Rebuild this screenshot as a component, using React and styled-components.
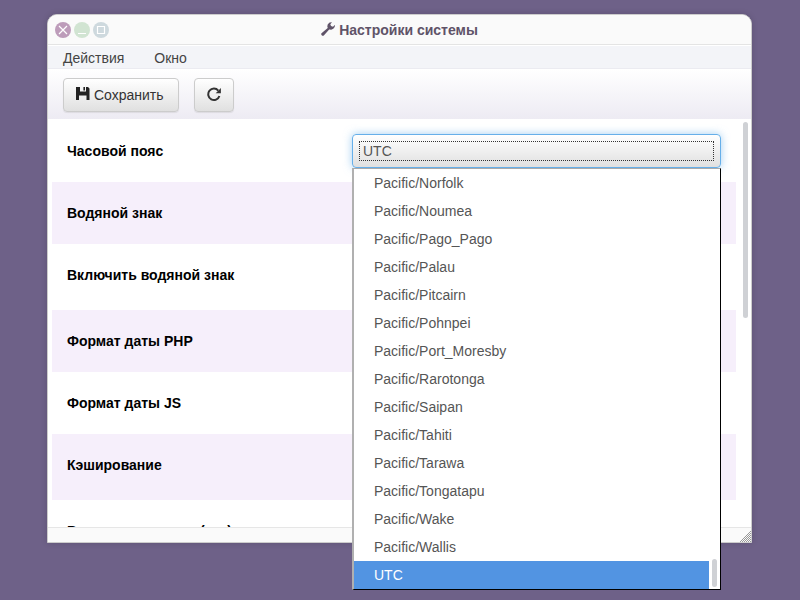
import React, { useLayoutEffect, useRef, useState } from "react";
import styled, { createGlobalStyle } from "styled-components";

const GlobalStyle = createGlobalStyle`
  *, *::before, *::after { box-sizing: border-box; }
  body {
    margin: 0;
    background: #6e6188;
    color: #333;
    font: 14px/20px "Liberation Sans", Arial, sans-serif;
  }
  button, input, select { font: inherit; color: inherit; margin: 0; }
`;

const Desktop = styled.div`
  display: flex;
  height: 100vh;
  padding: 14px 48px 57px 47px;
`;

const Window = styled.section`
  display: flex;
  flex-direction: column;
  flex: 1;
  min-width: 0;
  overflow: hidden;
  background: #fff;
  border: 1px solid #ccc;
  border-radius: 10px 10px 0 0;
  box-shadow: 0 0 6px rgba(0, 0, 0, 0.15);
`;

const TitleBar = styled.header`
  display: grid;
  grid-template-columns: 1fr auto 1fr;
  align-items: center;
  height: 30px;
  flex: none;
  padding: 0 7px;
  background: #fafafa;
  border-bottom: 1px solid #e4e4e4;
`;

const WindowButtons = styled.div`
  display: flex;
  gap: 3px;
`;

const RoundButton = styled.button`
  display: flex;
  width: 16px;
  height: 16px;
  padding: 0;
  border: 0;
  border-radius: 50%;
  background: ${(p) => p.$color};
`;

const Title = styled.h1`
  display: flex;
  align-items: center;
  gap: 4px;
  margin: 0;
  font-size: 14px;
  font-weight: bold;
  color: #5f5368;
`;

const MenuBar = styled.nav`
  display: flex;
  flex: none;
  gap: 30px;
  height: 24px;
  padding: 1px 15px 0;
  background: #f3f4f8;
  border-top: 1px solid #fff;
  border-bottom: 1px solid #ebebf1;
`;

const MenuButton = styled.button`
  padding: 0;
  border: 0;
  background: none;
  color: #444;
`;

const Toolbar = styled.div`
  display: flex;
  flex: none;
  gap: 15px;
  height: 50px;
  padding: 9px 15px 7px;
  background: linear-gradient(#fff, #edebf3);
`;

const ToolButton = styled.button`
  display: flex;
  align-items: center;
  gap: 4px;
  padding: 0 ${(p) => (p.$labelled ? 14 : 12)}px 0 12px;
  border: 1px solid #ccc;
  border-radius: 4px;
  background: linear-gradient(#fff, #e0e0e0);
  box-shadow: 0 1px 1px rgba(0, 0, 0, 0.08);
`;

const Body = styled.main`
  display: flex;
  flex: 1;
  gap: 7px;
  min-height: 0;
  padding: 1px 3px 0 4px;
  overflow: hidden;
`;

const Rows = styled.form`
  flex: 1;
  min-width: 0;
`;

const Row = styled.div`
  display: grid;
  grid-template-columns: 5fr 7fr;
  height: ${(p) => (p.$tall ? 66 : 62)}px;
  padding: 14px 0;
  background: ${(p) => (p.$shaded ? "#f6effb" : "#fff")};
`;

const RowLabel = styled.label`
  padding: 7px 15px;
  font-weight: bold;
  color: #000;
`;

const RowField = styled.div`
  padding: 0 15px;
`;

const TextField = styled.input`
  display: block;
  width: 100%;
  height: 34px;
  padding: 6px 12px;
  border: 1px solid #ccc;
  border-radius: 4px;
`;

const CheckField = styled.input`
  display: block;
  width: 20px;
  height: 20px;
`;

const SelectFrame = styled.div`
  display: flex;
  height: 34px;
  padding: 6px;
  border: 1px solid #66afe9;
  border-radius: 4px;
  background: linear-gradient(#fff, #e0e0e0);
  box-shadow: 0 0 8px rgba(102, 175, 233, 0.6);
`;

const Select = styled.select`
  flex: 1;
  min-width: 0;
  padding: 0 3px;
  line-height: 18px;
  appearance: none;
  border: 1px dotted #333;
  outline: 0;
  background: none;
  color: #555;
`;

const ScrollThumb = styled.div`
  flex: none;
  width: 5px;
  height: ${(p) => p.$length}px;
  border-radius: 3px;
  background: #cfd1d5;
`;

const BodyThumb = styled(ScrollThumb)`
  margin-top: 2px;
`;

const StatusBar = styled.footer`
  display: flex;
  flex: none;
  justify-content: flex-end;
  align-items: flex-end;
  height: 15px;
  background: #fafafa;
  border-top: 1px solid #e6e6e6;
`;

const Popup = styled.div`
  position: fixed;
  z-index: 10;
  display: flex;
  align-items: flex-end;
  gap: 3px;
  padding-right: 3px;
  background: #fff;
  border-style: solid;
  border-width: 1px 1px 1px 2px;
  border-color: #aaa #000 #000 #b0b0b0;
`;

const PopupThumb = styled(ScrollThumb)`
  margin-bottom: 2px;
`;

const Options = styled.ul`
  flex: 1;
  margin: 0;
  padding: 0;
  list-style: none;
`;

const Option = styled.li`
  padding: 4px 20px;
  color: ${(p) => (p.$selected ? "#fff" : "#555")};
  background: ${(p) => (p.$selected ? "#5294e2" : "#fff")};
`;

const ZONES = [
  "Pacific/Norfolk", "Pacific/Noumea", "Pacific/Pago_Pago", "Pacific/Palau",
  "Pacific/Pitcairn", "Pacific/Pohnpei", "Pacific/Port_Moresby",
  "Pacific/Rarotonga", "Pacific/Saipan", "Pacific/Tahiti", "Pacific/Tarawa",
  "Pacific/Tongatapu", "Pacific/Wake", "Pacific/Wallis", "UTC",
];

const SETTINGS = [
  { id: "watermark", label: "Водяной знак" },
  { id: "watermark-on", label: "Включить водяной знак", check: true },
  { id: "date-php", label: "Формат даты PHP" },
  { id: "date-js", label: "Формат даты JS" },
  { id: "cache", label: "Кэширование", check: true },
  { id: "cache-time", label: "Время жизни кэша (сек)" },
];

const WrenchIcon = () => (
  <svg width="14" height="16" viewBox="0 0 14 16" fill="currentColor" aria-hidden="true">
    <path d="M11 0.2 8.6 0.6 6.8 2.2 6.3 4.3 6.7 6 0.5 11.2Q-0.3 12.2 0.7 13.2Q1.8 14.3 2.8 13.4L8.2 7.5 10.2 7.7 12.3 6.8 13.7 5 14 2.8 12 4.7 10 4.1 9.3 2.3Z" />
  </svg>
);

const SaveIcon = () => (
  <svg width="14" height="18" viewBox="0 0 14 18" fill="#222" fillRule="evenodd" aria-hidden="true">
    <path d="M0 1H4V5.5H10V1H12L13.5 2.5V14H10.5V9.5H3V14H0ZM7.4 1H9V4.4H7.4Z" />
  </svg>
);

const ReloadIcon = () => (
  <svg width="14" height="16" viewBox="0 0 14 16" aria-hidden="true">
    <path d="M11.3 3.6A5.7 5.7 0 1 0 12.4 9" fill="none" stroke="#333" strokeWidth="2" />
    <path d="M13.9 1V6.2H8.7Z" fill="#333" />
  </svg>
);

const WindowGlyph = ({ d }) => (
  <svg width="16" height="16" viewBox="0 0 16 16" fill="none" stroke="#fff" strokeWidth="1.2" aria-hidden="true">
    <path d={d} />
  </svg>
);

const ResizeGrip = () => (
  <svg width="12" height="12" viewBox="0 0 12 12" aria-hidden="true">
    <defs>
      <pattern id="grip" width="2" height="2" patternUnits="userSpaceOnUse">
        <path d="M0 0H1V1H0ZM1 1H2V2H1Z" fill="#999" shapeRendering="crispEdges" />
      </pattern>
    </defs>
    <path d="M12 0V12H0Z" fill="url(#grip)" />
  </svg>
);

function TimeZoneSelect({ id }) {
  const frame = useRef(null);
  const [place, setPlace] = useState(null);
  const [zone, setZone] = useState("UTC");
  const [open, setOpen] = useState(true);

  useLayoutEffect(() => {
    const measure = () => {
      const r = frame.current.getBoundingClientRect();
      setPlace({ left: r.left, top: r.bottom, width: r.width });
    };
    measure();
    window.addEventListener("resize", measure);
    return () => window.removeEventListener("resize", measure);
  }, []);

  const choose = (z) => {
    setZone(z);
    setOpen(false);
  };

  return (
    <>
      <SelectFrame ref={frame}>
        <Select
          id={id}
          value={zone}
          onMouseDown={(e) => {
            e.preventDefault();
            setOpen(!open);
          }}
          onChange={(e) => setZone(e.target.value)}
        >
          {ZONES.map((z) => <option key={z}>{z}</option>)}
        </Select>
      </SelectFrame>
      {open && place && (
        <Popup style={place}>
          <Options role="listbox" aria-label="Часовой пояс">
            {ZONES.map((z) => (
              <Option key={z} role="option" aria-selected={z === zone} $selected={z === zone} onClick={() => choose(z)}>
                {z}
              </Option>
            ))}
          </Options>
          <PopupThumb $length={28} />
        </Popup>
      )}
    </>
  );
}

export default function App() {
  return (
    <>
      <GlobalStyle />
      <Desktop>
        <Window>
          <TitleBar>
            <WindowButtons>
              <RoundButton $color="#bd9cba" aria-label="Закрыть"><WindowGlyph d="M4 4L12 12M12 4L4 12" /></RoundButton>
              <RoundButton $color="#d1e4d2" aria-label="Свернуть"><WindowGlyph d="M4 11.5H12" /></RoundButton>
              <RoundButton $color="#ced9de" aria-label="Развернуть"><WindowGlyph d="M4.5 4.5H11.5V11.5H4.5Z" /></RoundButton>
            </WindowButtons>
            <Title><WrenchIcon />Настройки системы</Title>
          </TitleBar>
          <MenuBar>
            <MenuButton>Действия</MenuButton>
            <MenuButton>Окно</MenuButton>
          </MenuBar>
          <Toolbar>
            <ToolButton $labelled><SaveIcon />Сохранить</ToolButton>
            <ToolButton aria-label="Обновить"><ReloadIcon /></ToolButton>
          </Toolbar>
          <Body>
            <Rows>
              <Row>
                <RowLabel htmlFor="timezone">Часовой пояс</RowLabel>
                <RowField><TimeZoneSelect id="timezone" /></RowField>
              </Row>
              {SETTINGS.map((s, i) => (
                <Row key={s.id} $shaded={i % 2 === 0} $tall={s.check}>
                  <RowLabel htmlFor={s.id}>{s.label}</RowLabel>
                  <RowField>
                    {s.check ? <CheckField id={s.id} type="checkbox" /> : <TextField id={s.id} type="text" />}
                  </RowField>
                </Row>
              ))}
            </Rows>
            <BodyThumb $length={196} />
          </Body>
          <StatusBar><ResizeGrip /></StatusBar>
        </Window>
      </Desktop>
    </>
  );
}
